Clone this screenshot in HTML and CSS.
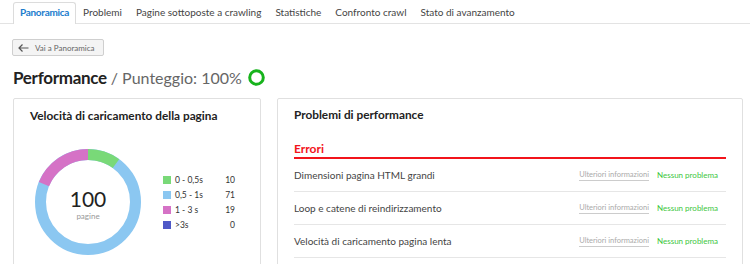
FILE: index.html
```html
<!DOCTYPE html>
<html lang="it">
<head>
  <meta charset="UTF-8">
  <title>Performance</title>
  <link rel="stylesheet" href="styles.css">
</head>
<body>
  <!-- Tabs -->
  <div class="tabs">
    <div class="tab active">Panoramica</div>
    <div class="tab">Problemi</div>
    <div class="tab">Pagine sottoposte a crawling</div>
    <div class="tab">Statistiche</div>
    <div class="tab">Confronto crawl</div>
    <div class="tab">Stato di avanzamento</div>
  </div>

  <div class="page">
    <button class="back-btn">
      <svg width="11" height="8" viewBox="0 0 11 8"><path d="M10.5 4H1M4.5 0.5L1 4l3.5 3.5" fill="none" stroke="#555" stroke-width="1.2"/></svg>
      Vai a Panoramica
    </button>

    <h1 class="title">Performance <span class="score">/ Punteggio: 100%</span>
      <svg class="ring" width="17" height="17" viewBox="0 0 17 17"><circle cx="8.5" cy="8.5" r="6.8" fill="none" stroke="#17b31c" stroke-width="3"/></svg>
    </h1>

    <div class="cards">
      <!-- Load speed -->
      <div class="card speed">
        <h2>Velocità di caricamento della pagina</h2>
        <div class="chart-row">
          <div class="donut">
            <svg width="106" height="106" viewBox="0 0 106 106">
              <g transform="rotate(-90 53 53)" fill="none" stroke-width="11">
                <circle cx="53" cy="53" r="47.5" stroke="#8bc7f1"/>
                <circle cx="53" cy="53" r="47.5" stroke="#79d978" stroke-dasharray="29.85 298.45"/>
                <circle cx="53" cy="53" r="47.5" stroke="#d572c6" stroke-dasharray="56.7 298.45" stroke-dashoffset="-241.75"/>
              </g>
            </svg>
            <div class="donut-label">
              <div class="big">100</div>
              <div class="small">pagine</div>
            </div>
          </div>
          <table class="legend">
            <tr><td><span class="sw green"></span>0 - 0,5s</td><td class="num">10</td></tr>
            <tr><td><span class="sw blue"></span>0,5 - 1s</td><td class="num">71</td></tr>
            <tr><td><span class="sw pink"></span>1 - 3 s</td><td class="num">19</td></tr>
            <tr><td><span class="sw navy"></span>&gt;3s</td><td class="num">0</td></tr>
          </table>
        </div>
      </div>

      <!-- Issues -->
      <div class="card issues">
        <h2>Problemi di performance</h2>
        <div class="errors">Errori</div>
        <div class="issue">
          <span class="name">Dimensioni pagina HTML grandi</span>
          <span class="more">Ulteriori informazioni</span>
          <span class="ok">Nessun problema</span>
        </div>
        <div class="issue">
          <span class="name">Loop e catene di reindirizzamento</span>
          <span class="more">Ulteriori informazioni</span>
          <span class="ok">Nessun problema</span>
        </div>
        <div class="issue">
          <span class="name">Velocità di caricamento pagina lenta</span>
          <span class="more">Ulteriori informazioni</span>
          <span class="ok">Nessun problema</span>
        </div>
      </div>
    </div>
  </div>
</body>
</html>
```

FILE: styles.css
```css
body {
  margin: 0;
  font-family: Lato, "Open Sans", sans-serif;
  color: #333;
  background: #fff;
  overflow: hidden;
}
.tabs {
  display: flex;
  align-items: flex-end;
  height: 23px;
  padding-left: 13px;
  border-bottom: 1px solid #e3e3e3;
  font-size: 10px;
}
.tab {
  padding: 0 6px;
  height: 20px;
  line-height: 19px;
  color: #444;
  border: 1px solid transparent;
  border-bottom: none;
}
.tab.active {
  color: #1b7ccd;
  font-weight: 700;
  letter-spacing: -0.3px;
  background: #fff;
  border-color: #dcdcdc;
  border-radius: 3px 3px 0 0;
  margin-bottom: -1px;
  height: 21px;
}
.page {
  padding: 15px 7px 0 13px;
}
.back-btn {
  display: flex;
  align-items: center;
  gap: 6px;
  height: 17px;
  padding: 0 8px 0 5px;
  margin-left: -1px;
  font-family: inherit;
  font-size: 8px;
  color: #666;
  background: #f4f4f4;
  border: 1px solid #cfcfcf;
  border-radius: 2px;
}
.title {
  display: flex;
  align-items: center;
  margin: 10px 0 0;
  height: 22px;
  font-size: 17px;
  font-weight: 700;
  letter-spacing: -0.3px;
  color: #222;
}
.score {
  font-weight: 400;
  font-size: 16px;
  letter-spacing: 0;
  color: #666;
  margin-left: 4px;
}
.ring {
  margin-left: 6px;
}
.cards {
  display: flex;
  gap: 16px;
  margin-top: 10px;
}
.card {
  border: 1px solid #e0e0e0;
  border-radius: 2px;
  height: 180px;
  box-sizing: border-box;
}
.card h2 {
  margin: 0;
  font-size: 11.8px;
  font-weight: 700;
  color: #222;
}
.speed {
  width: 248px;
  padding: 9px 0 0 16px;
}
.chart-row {
  display: flex;
  align-items: center;
  margin-top: 26px;
  margin-left: 5px;
}
.donut {
  position: relative;
  width: 106px;
  height: 106px;
}
.donut svg {
  display: block;
}
.donut-label {
  position: absolute;
  inset: 4px 0 0 0;
  display: flex;
  flex-direction: column;
  align-items: center;
  justify-content: center;
}
.donut-label .big {
  font-size: 21px;
  line-height: 22px;
  color: #222;
}
.donut-label .small {
  font-size: 8px;
  color: #999;
  margin-top: 1px;
}
.legend {
  margin-left: 22px;
  width: 72px;
  border-collapse: collapse;
  font-size: 8.5px;
  color: #333;
}
.legend td {
  padding: 0;
  height: 15px;
}
.legend .num {
  text-align: right;
}
.sw {
  display: inline-block;
  width: 8px;
  height: 8px;
  margin-right: 4px;
  vertical-align: -1px;
}
.sw.green { background: #79d978; }
.sw.blue { background: #8bc7f1; }
.sw.pink { background: #d572c6; }
.sw.navy { background: #4f59c7; }
.issues {
  flex: 1;
  padding: 8px 16px 0 16px;
}
.errors {
  margin-top: 19px;
  padding-bottom: 1px;
  font-size: 12px;
  font-weight: 700;
  color: #f2141b;
  border-bottom: 2px solid #f2141b;
}
.issue {
  display: flex;
  align-items: center;
  height: 32px;
  border-bottom: 1px solid #e6e6e6;
  font-size: 10px;
  color: #444;
}
.issue .name {
  flex: 1;
}
.issue .more {
  font-size: 7.5px;
  color: #aaa;
  border-bottom: 1px solid #ccc;
  line-height: 11px;
  white-space: nowrap;
}
.issue .ok {
  font-size: 8px;
  color: #3cc63c;
  margin-left: 8px;
  width: 69px;
  white-space: nowrap;
}
```
